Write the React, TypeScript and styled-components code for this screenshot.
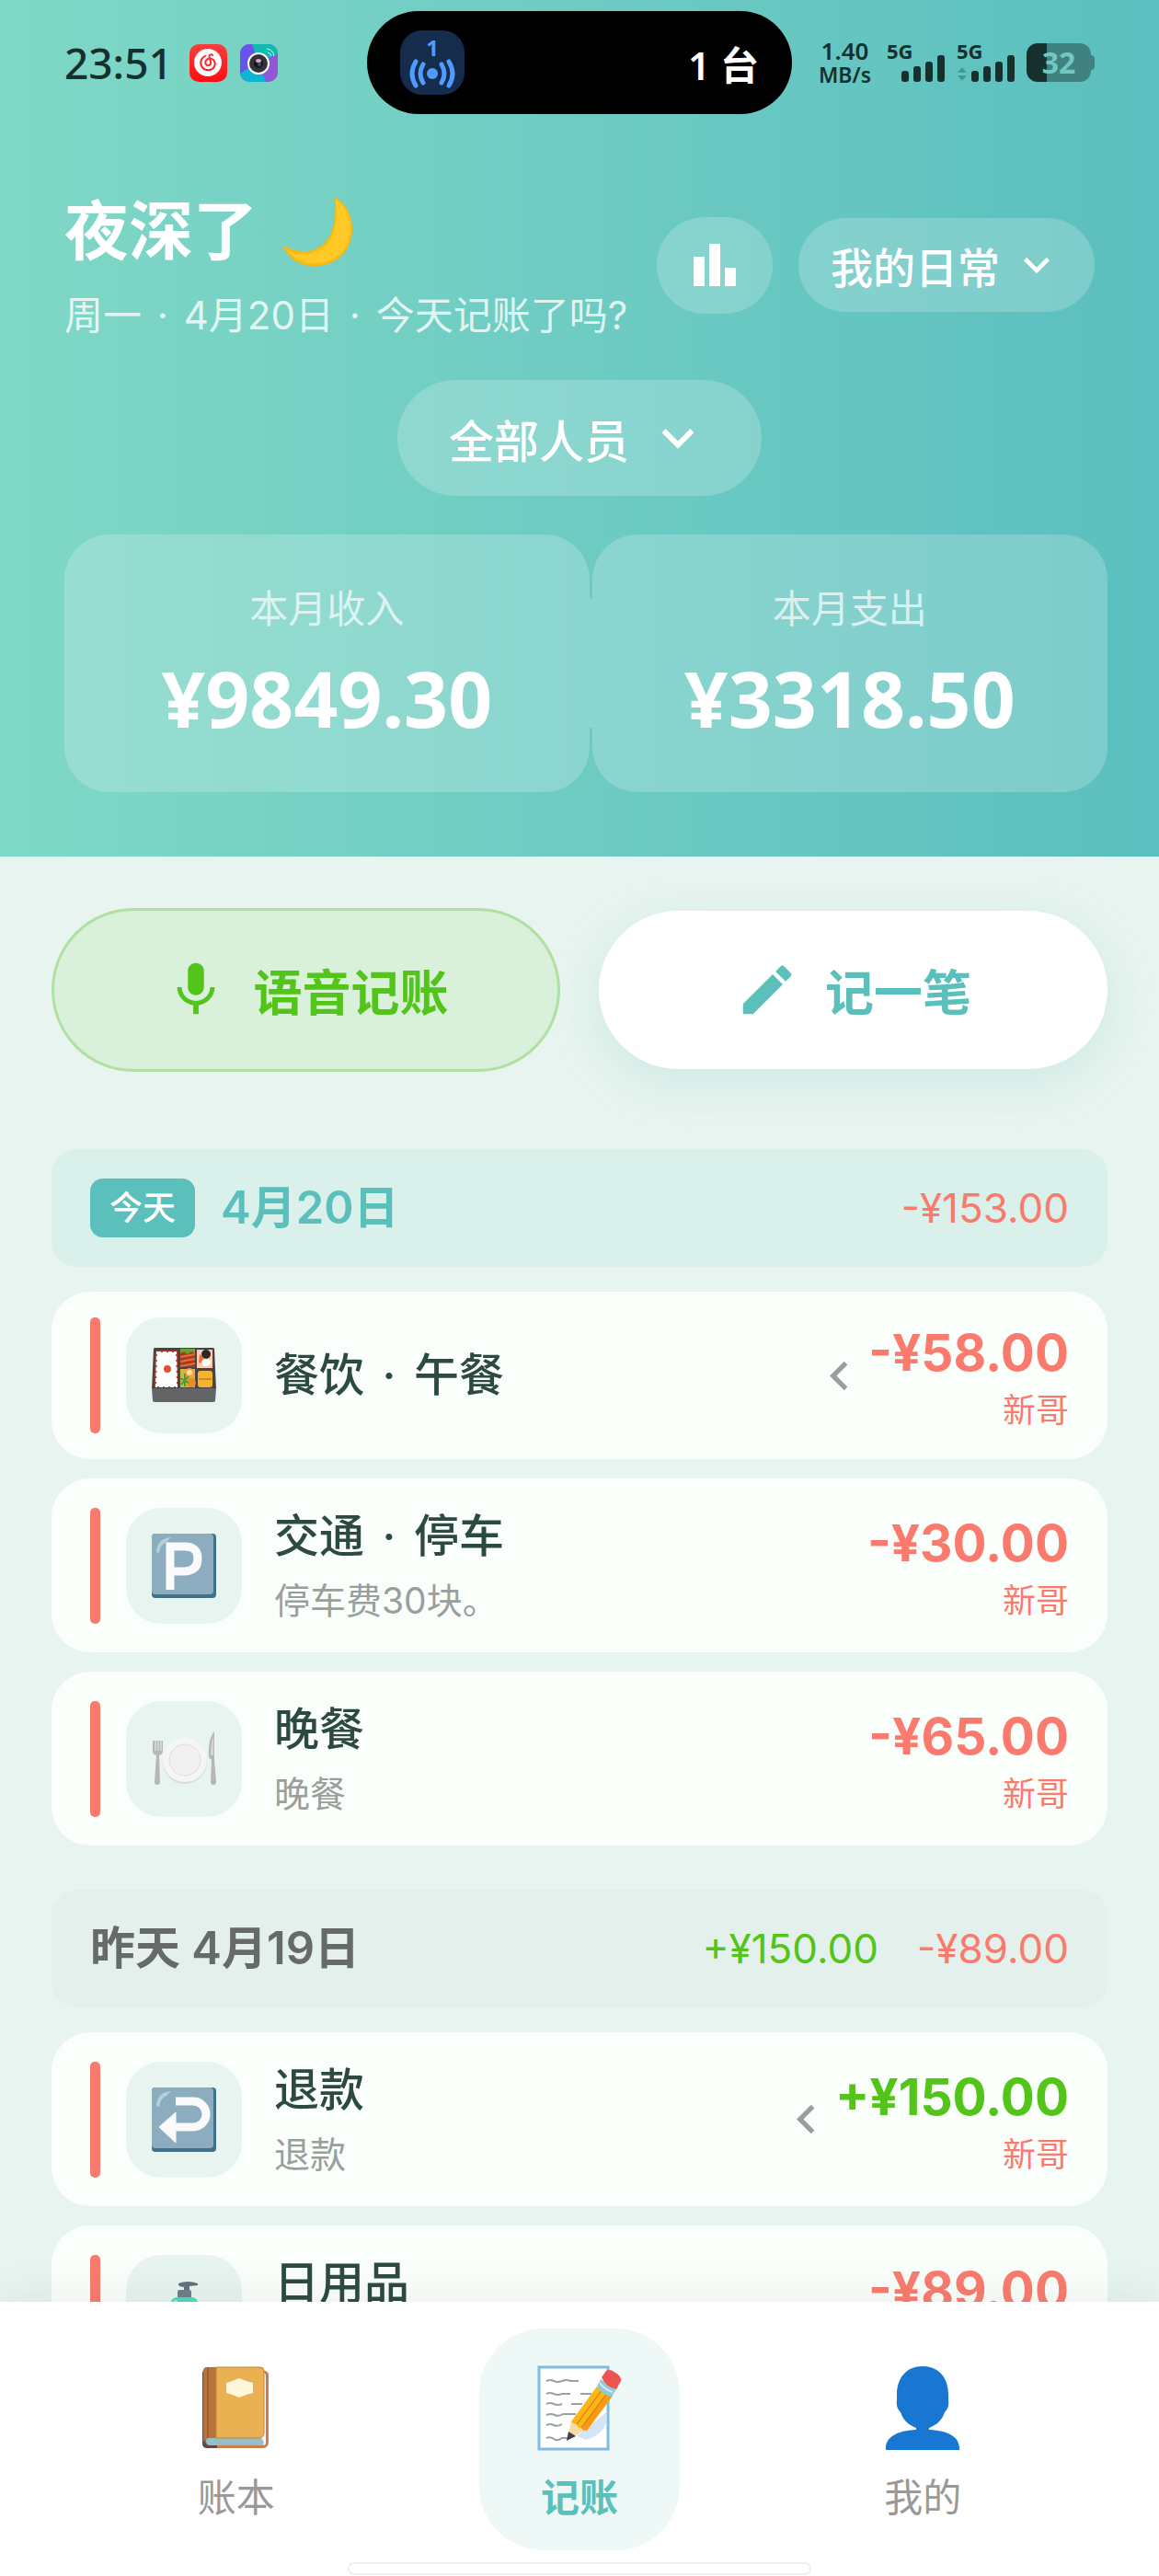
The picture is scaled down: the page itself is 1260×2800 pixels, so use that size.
import type { ReactNode } from 'react';
import styled, { createGlobalStyle } from 'styled-components';
import { MdEdit, MdKeyboardArrowDown, MdKeyboardArrowLeft } from 'react-icons/md';
import { SiNeteasecloudmusic } from 'react-icons/si';

type Tone = 'income' | 'expense';

interface Total {
  tone: Tone;
  text: string;
}

interface RecordItem {
  id: string;
  icon: ReactNode;
  category: string;
  detail?: string;
  note?: string;
  amount: string;
  tone: Tone;
  person: string;
  swipeHint?: boolean;
}

interface DayGroup {
  date: string;
  today?: boolean;
  totals: Total[];
  records: RecordItem[];
}

const colors = {
  teal: '#5bbfbb',
  income: '#52c41a',
  expense: '#fa7b6e',
  text: '#2d4a40',
  muted: '#999f9c',
};

export default function App() {
  return (
    <Screen>
      <GlobalStyle />
      <Header>
        <StatusBar />
        <TitleRow>
          <div>
            <Greeting>
              夜深了 <MoonIcon />
            </Greeting>
            <SubTitle>
              周一<Dot>·</Dot>4月20日<Dot>·</Dot>今天记账了吗?
            </SubTitle>
          </div>
          <HeaderActions>
            <ChartButton type="button" aria-label="统计">
              <ChartIcon />
            </ChartButton>
            <LedgerButton type="button">
              我的日常
              <MdKeyboardArrowDown />
            </LedgerButton>
          </HeaderActions>
        </TitleRow>
        <PersonButton type="button">
          全部人员
          <MdKeyboardArrowDown />
        </PersonButton>
        <Summary>
          <SummaryCard>
            <SummaryLabel>本月收入</SummaryLabel>
            <SummaryAmount>¥9849.30</SummaryAmount>
          </SummaryCard>
          <SummaryDivider />
          <SummaryCard>
            <SummaryLabel>本月支出</SummaryLabel>
            <SummaryAmount>¥3318.50</SummaryAmount>
          </SummaryCard>
        </Summary>
      </Header>

      <Content>
        <EntryButtons>
          <VoiceButton type="button">
            <MicIcon />
            语音记账
          </VoiceButton>
          <ManualButton type="button">
            <MdEdit />
            记一笔
          </ManualButton>
        </EntryButtons>

        {groups.map((group) => (
          <Day key={group.date}>
            <DayHeader $today={group.today}>
              <DayTitle>
                {group.today && <TodayBadge>今天</TodayBadge>}
                {group.date}
              </DayTitle>
              <DayTotals>
                {group.totals.map((total) => (
                  <DayTotal key={total.text} $tone={total.tone}>
                    {total.text}
                  </DayTotal>
                ))}
              </DayTotals>
            </DayHeader>
            <RecordList>
              {group.records.map((record) => (
                <RecordRow key={record.id} record={record} />
              ))}
            </RecordList>
          </Day>
        ))}
      </Content>

      <TabBar>
        <Tabs>
          <Tab href="#ledgers">
            <BookIcon />
            账本
          </Tab>
          <Tab href="#record" $active aria-current="page">
            <MemoIcon />
            记账
          </Tab>
          <Tab href="#me">
            <PersonIcon />
            我的
          </Tab>
        </Tabs>
        <HomeIndicator />
      </TabBar>
    </Screen>
  );
}

function RecordRow({ record }: { record: RecordItem }) {
  return (
    <RecordCard>
      <RecordBar />
      <RecordIcon>{record.icon}</RecordIcon>
      <RecordBody>
        <RecordTitle>
          {record.category}
          {record.detail && (
            <>
              <Dot>·</Dot>
              {record.detail}
            </>
          )}
        </RecordTitle>
        {record.note && <RecordNote>{record.note}</RecordNote>}
      </RecordBody>
      {record.swipeHint && (
        <SwipeHint>
          <MdKeyboardArrowLeft />
        </SwipeHint>
      )}
      <RecordSide>
        <RecordAmount $tone={record.tone}>{record.amount}</RecordAmount>
        <RecordPerson>{record.person}</RecordPerson>
      </RecordSide>
    </RecordCard>
  );
}

function StatusBar() {
  return (
    <StatusRow>
      <StatusLeft>
        <Clock>23:51</Clock>
        <MusicBadge>
          <SiNeteasecloudmusic />
        </MusicBadge>
        <CameraIcon />
      </StatusLeft>
      <Island>
        <HotspotChip>
          <span>1</span>
          <svg width="52" height="32" viewBox="0 0 52 32" fill="none" stroke="#4f9bff" strokeWidth="5" strokeLinecap="round">
            <circle cx="26" cy="16" r="6" fill="#4f9bff" stroke="none" />
            <path d="M16 6q-6 10 0 20M36 6q6 10 0 20M8 3q-8 13 0 26M44 3q8 13 0 26" />
          </svg>
        </HotspotChip>
        1 台
      </Island>
      <StatusRight>
        <NetSpeed>
          <strong>1.40</strong>
          <span>MB/s</span>
        </NetSpeed>
        <Signal />
        <Signal arrows />
        <Battery>32</Battery>
      </StatusRight>
    </StatusRow>
  );
}

function Signal({ arrows }: { arrows?: boolean }) {
  return (
    <SignalBox>
      <span>5G</span>
      <svg width="64" height="30" viewBox="0 0 64 30" fill="#16302e">
        {arrows && <path d="M1 20l5-6 5 6zM1 23l5 6 5-6z" fill="#3f9a96" />}
        <rect x="16" y="18" width="8" height="12" rx="3" />
        <rect x="29" y="13" width="8" height="17" rx="3" />
        <rect x="42" y="8" width="8" height="22" rx="3" />
        <rect x="55" y="1" width="8" height="29" rx="3" />
      </svg>
    </SignalBox>
  );
}

function CameraIcon() {
  return (
    <svg width="41" height="41" viewBox="0 0 41 41">
      <defs>
        <clipPath id="camera-clip">
          <rect width="41" height="41" rx="10" />
        </clipPath>
      </defs>
      <g clipPath="url(#camera-clip)">
        <rect width="41" height="41" fill="#9257d6" />
        <path d="M0 0h14l4 20L0 32z" fill="#6a52ec" />
        <path d="M13 0h28v10L20 20z" fill="#0fbab0" />
        <path d="M0 32l20-12 8 21H0z" fill="#0cb6d3" />
      </g>
      <path d="M29 5q7 1 8 8M30 9q4 1 4 4" stroke="#bff" strokeWidth="1" fill="none" />
      <circle cx="20" cy="21" r="11" fill="#333" stroke="#fff" strokeWidth="2" />
      <circle cx="20" cy="21" r="5" fill="#17121f" />
      <ellipse cx="20" cy="18" rx="3" ry="2" fill="#d9a5c4" />
      <circle cx="21" cy="22" r="2" fill="#4b4580" />
    </svg>
  );
}

function MoonIcon() {
  return (
    <svg width="80" height="80" viewBox="0 0 80 80">
      <path d="M59 2c2 28-3 46-16 54-12 8-26 6-41-1 7 16 23 24 39 22 22-2 37-18 37-40C78 22 71 9 59 2z" fill="#fbb90d" />
      <path d="M60 5c3 27-2 45-16 54-11 7-25 7-37 1 8 10 20 15 33 14 21-1 36-16 36-37 0-14-6-25-16-32z" fill="#ffca28" />
    </svg>
  );
}

function ChartIcon() {
  return (
    <svg width="46" height="46" viewBox="0 0 46 46" fill="currentColor">
      <path d="M0 14h12v32H0zM17 0h12v46H17zM34 26h12v20H34z" />
    </svg>
  );
}

function MicIcon() {
  return (
    <svg viewBox="0 0 24 24" fill="currentColor">
      <path d="M12 14c1.66 0 2.99-1.34 2.99-3L15 5c0-1.66-1.34-3-3-3S9 3.34 9 5v6c0 1.66 1.34 3 3 3zm5.3-3c0 3-2.54 5.1-5.3 5.1S6.7 14 6.7 11H5c0 3.41 2.72 6.23 6 6.72V21h2v-3.28c3.28-.48 6-3.3 6-6.72h-1.7z" />
    </svg>
  );
}

function BentoIcon() {
  return (
    <svg viewBox="0 0 70 70">
      <path d="M2 6q0-1 2-1h62q2 0 2 1l2 44H0z" fill="#4a4243" />
      <path d="M0 49h70l-1 13q0 2-2 2H3q-2 0-2-2z" fill="#636466" />
      <path d="M4 8h24v40H3z" fill="#b5432c" />
      <path d="M6 10h20l1 37H5z" fill="#fff" stroke="#fff" strokeWidth="2" strokeDasharray="4 2" />
      <circle cx="17" cy="28" r="4" fill="#e2502c" />
      <path d="M31 6h16v20H31z" fill="#a93a1f" />
      <path d="M31 6h16v5l-4-2-4 3-4-3-4 2z" fill="#6aa336" />
      <path d="M31 15l16-3M31 20l16-3M31 25l16-3" stroke="#e0703c" strokeWidth="2" />
      <path d="M49 7h17v20H49z" fill="#f7cdb5" />
      <ellipse cx="59" cy="12" rx="5" ry="5" fill="#33251f" />
      <path d="M52 12q6 3 4 10l-5-1z" fill="#f06a35" />
      <ellipse cx="59" cy="21" rx="5" ry="4" fill="#fff" />
      <path d="M31 28h16v20H31z" fill="#c7b945" />
      <circle cx="41" cy="33" r="6" fill="#f2a33a" />
      <circle cx="41" cy="32" r="3" fill="#fbe0a6" />
      <circle cx="43" cy="43" r="5" fill="#ef8a24" />
      <path d="M36 33v14M31 38l9 5M40 36l-8 9" stroke="#4f9a38" strokeWidth="2" />
      <rect x="50" y="30" width="16" height="18" rx="3" fill="#f2b32f" />
      <path d="M51 39h14" stroke="#d18a1c" strokeWidth="2" />
    </svg>
  );
}

function BlueTile({ children }: { children: ReactNode }) {
  return (
    <svg viewBox="0 0 70 70">
      <rect width="70" height="70" rx="4" fill="#437087" />
      <rect width="67" height="66" rx="4" fill="#8badbf" />
      <path d="M5 20q1-15 16-16l-5 5q-7 3-8 12z" fill="#b5d0dc" />
      {children}
    </svg>
  );
}

function ParkingIcon() {
  return (
    <BlueTile>
      <path d="M20 61V14h16q14 0 14 13T36 41H20" fill="none" stroke="#fafafa" strokeWidth="9" />
    </BlueTile>
  );
}

function ReturnIcon() {
  return (
    <BlueTile>
      <path d="M26 15h19a14 14 0 0 1 0 28H24" fill="none" stroke="#fafafa" strokeWidth="9" />
      <path d="M26 27v33L8 43z" fill="#fafafa" stroke="#fafafa" strokeWidth="1" strokeLinejoin="round" />
    </BlueTile>
  );
}

function PlateIcon() {
  return (
    <svg viewBox="0 0 70 70">
      <circle cx="36" cy="38" r="24" fill="#d9dedc" />
      <circle cx="36" cy="36" r="24" fill="#f5f5f5" />
      <circle cx="36" cy="36" r="17" fill="#f0f0f0" stroke="#dcdedd" strokeWidth="1" />
      <path d="M1 15v11q0 4 4 5L3 60q0 3 3 3t3-3L8 31q4-1 4-5V15" fill="#b5b7b7" />
      <path d="M4 14v12M7 14v12M10 14v12" stroke="#e9f3f0" strokeWidth="1" />
      <path d="M68 5q-7 8-6 28l3 3-1 24q0 3 3 3t3-3l-2-25z" fill="#b5b7b7" />
      <path d="M67 10q-3 8-3 21h3z" fill="#d5d7d7" />
    </svg>
  );
}

function SoapIcon() {
  return (
    <svg viewBox="0 0 70 70">
      <path d="M29 3q10-4 21 0v2l-9 1v5h-6V7q-4 0-6-2z" fill="#63727d" />
      <rect x="28" y="10" width="15" height="10" rx="2" fill="#6f7f8a" />
      <path d="M21 24q0-5 6-6h17q6 1 6 6v42q0 4-4 4H25q-4 0-4-4z" fill="#4bdcc1" />
      <circle cx="26" cy="23" r="2" fill="#a9f3e5" />
    </svg>
  );
}

function BookIcon() {
  return (
    <svg viewBox="-2 0 98 98">
      <path d="M14 8h60q8 1 8 5v72q0 8-6 8H18q-6 0-6-7z" fill="#c87f50" />
      <path d="M73 11h4q2 1 2 4v72q0 3-3 3l-4-2z" fill="#f5f5f5" />
      <path d="M14 84q2-3 6-3h52q6 3 4 9H18q-4-1-4-6z" fill="#93bfc8" />
      <path d="M13 7q-3 1-3 5v76q0 5 5 5h11v-3H17q-4-1-4-5 1-4 6-4h6V5z" fill="#5b4b45" />
      <path d="M11 9q0-4 4-4h10v77h-8q-4 0-6 5z" fill="#b77339" />
      <path d="M16 5v77" stroke="#8a4f25" strokeWidth="1" />
      <path d="M25 5h48q4 0 4 4v67q0 6-6 6H25z" fill="#eab153" stroke="#c38338" strokeWidth="1" />
      <path d="M36 22q8-2 14-5 7 3 15 5v11q-9 2-15 5-6-3-14-5z" fill="#fff7dc" />
    </svg>
  );
}

function MemoIcon() {
  return (
    <svg viewBox="-1 0 98 98">
      <rect x="4" y="5" width="75" height="89" fill="#fff" stroke="#7fbce3" strokeWidth="3" />
      <path d="M77 54L45 80l10 4q17-5 22-18z" fill="#d4e5f9" />
      <g fill="none" stroke="#96a3a4" strokeWidth="2">
        <path d="M12 20q4-2 8 0t9 0 9 0h9" />
        <path d="M12 34q4-2 8 0t9 0h9M49 34h12" />
        <path d="M12 45q4-2 8 0t9 0M39 45h12" />
        <path d="M12 57q5-2 9 0t9-1h14" />
        <path d="M12 68q4-2 8 0t9-1" />
        <path d="M12 82q4-2 8 1t9-1h9" />
      </g>
      <path d="M35 84l4-20 16 9z" fill="#f8dca5" />
      <path d="M34 85l2-10 8 5z" fill="#424242" />
      <path d="M39 64l28-38 17 10-28 38q-4 1-6-3-5 0-5-4-4 0-6-3z" fill="#ffb514" />
      <path d="M50 71l28-38 6 3-28 38q-4 0-6-3z" fill="#f89a15" />
      <path d="M45 67l28-38M50 71l28-38" stroke="#bd7417" strokeWidth="1" />
      <path d="M67 26l4-8 17 11-5 8q-9 0-16-11z" fill="#92c9d4" />
      <path d="M70 22q6 8 14 10" stroke="#d6edf2" strokeWidth="2" fill="none" />
      <path d="M72 16l5-7q4-3 10 2 7 4 6 9l-5 9q-11-2-16-13z" fill="#ee5350" />
    </svg>
  );
}

function PersonIcon() {
  return (
    <svg viewBox="0 0 98 98">
      <path
        d="M49 4c17 0 28 12 28 31v6c1 6-1 10-4 13-3 9-9 14-17 17v2c21 1 33 8 33 20v2H9v-2c0-12 12-19 33-20v-2c-8-3-14-8-17-17-3-3-5-7-4-13v-6C21 16 32 4 49 4z"
        fill="#1976d2"
      />
    </svg>
  );
}

const groups: DayGroup[] = [
  {
    date: '4月20日',
    today: true,
    totals: [{ tone: 'expense', text: '-¥153.00' }],
    records: [
      { id: 'lunch', icon: <BentoIcon />, category: '餐饮', detail: '午餐', amount: '-¥58.00', tone: 'expense', person: '新哥', swipeHint: true },
      { id: 'parking', icon: <ParkingIcon />, category: '交通', detail: '停车', note: '停车费30块。', amount: '-¥30.00', tone: 'expense', person: '新哥' },
      { id: 'dinner', icon: <PlateIcon />, category: '晚餐', note: '晚餐', amount: '-¥65.00', tone: 'expense', person: '新哥' },
    ],
  },
  {
    date: '昨天 4月19日',
    totals: [
      { tone: 'income', text: '+¥150.00' },
      { tone: 'expense', text: '-¥89.00' },
    ],
    records: [
      { id: 'refund', icon: <ReturnIcon />, category: '退款', note: '退款', amount: '+¥150.00', tone: 'income', person: '新哥', swipeHint: true },
      { id: 'daily', icon: <SoapIcon />, category: '日用品', note: '日用品', amount: '-¥89.00', tone: 'expense', person: '新哥' },
    ],
  },
];

const GlobalStyle = createGlobalStyle`
  * {
    box-sizing: border-box;
  }

  body {
    margin: 0;
    background: #e8f4f0;
    font-family: Inter, 'Noto Sans CJK SC', sans-serif;
  }

  button {
    border: none;
    font-family: inherit;
    cursor: pointer;
  }

  svg {
    display: block;
    flex: none;
  }
`;

const Screen = styled.div`
  display: flex;
  flex-direction: column;
  height: 100vh;
  overflow: hidden;
`;

const Header = styled.header`
  flex: none;
  display: flex;
  flex-direction: column;
  padding: 0 56px 70px 70px;
  background: linear-gradient(90deg, #80d8c6, #5bbfbf);
  color: #fff;
`;

const StatusRow = styled.div`
  display: grid;
  grid-template-columns: 1fr 462px 1fr;
  align-items: center;
  height: 136px;
  margin-right: 14px;
  color: #16302e;
  font-family: 'Noto Sans', 'Noto Sans CJK SC', sans-serif;
`;

const StatusLeft = styled.div`
  display: flex;
  align-items: center;
  gap: 14px;
`;

const Clock = styled.span`
  margin-right: 4px;
  font-size: 46px;
  font-weight: 500;
`;

const MusicBadge = styled.span`
  display: flex;
  align-items: center;
  justify-content: center;
  width: 41px;
  height: 41px;
  border-radius: 10px;
  background: linear-gradient(180deg, #f8403c, #fd0d12);
  color: #fff;
  font-size: 30px;
`;

const Island = styled.div`
  display: flex;
  align-items: center;
  justify-content: space-between;
  height: 112px;
  padding: 0 36px;
  border-radius: 56px;
  background: #000;
  color: #fff;
  font-size: 42px;
  font-weight: 600;
`;

const HotspotChip = styled.div`
  display: flex;
  flex-direction: column;
  align-items: center;
  justify-content: center;
  width: 70px;
  height: 70px;
  border-radius: 24px;
  background: #162c4d;
  color: #4f9bff;
  font-size: 24px;
  font-weight: 700;
  line-height: 24px;
`;

const StatusRight = styled.div`
  display: flex;
  align-items: center;
  justify-content: flex-end;
  gap: 12px;
  padding-right: 4px;
`;

const NetSpeed = styled.div`
  display: flex;
  flex-direction: column;
  align-items: center;
  margin-right: 5px;
  font-size: 23px;
  font-weight: 600;
  line-height: 26px;

  strong {
    font-size: 26px;
    font-weight: 600;
  }
`;

const SignalBox = styled.div`
  position: relative;
  display: flex;
  align-items: flex-end;
  height: 42px;

  span {
    position: absolute;
    top: -4px;
    left: 0;
    font-size: 22px;
    font-weight: 700;
    line-height: 24px;
  }
`;

const Battery = styled.div`
  position: relative;
  width: 70px;
  height: 42px;
  border-radius: 12px;
  background: linear-gradient(90deg, #16302e 22px, #40827f 22px);
  color: #74c6c2;
  font-size: 32px;
  font-weight: 700;
  line-height: 42px;
  text-align: center;

  &::after {
    content: '';
    position: absolute;
    top: 13px;
    right: -4px;
    width: 4px;
    height: 16px;
    border-radius: 0 4px 4px 0;
    background: #40827f;
  }
`;

const TitleRow = styled.div`
  display: flex;
  align-items: center;
  justify-content: space-between;
  margin: 67px 14px 40px 0;
`;

const Greeting = styled.h1`
  display: flex;
  align-items: center;
  gap: 25px;
  margin: 0 0 12px;
  font-size: 70px;
  font-weight: 700;
  line-height: 98px;
`;

const SubTitle = styled.p`
  margin: 0;
  color: rgba(255, 255, 255, 0.8);
  font-size: 42px;
  line-height: 60px;
  white-space: nowrap;
`;

const Dot = styled.span`
  margin: 0 0.4em;
`;

const HeaderActions = styled.div`
  display: flex;
  align-items: center;
  gap: 28px;
`;

const GlassButton = styled.button`
  display: flex;
  align-items: center;
  justify-content: center;
  background: rgba(255, 255, 255, 0.2);
  color: #fff;
  font-weight: 500;
`;

const ChartButton = styled(GlassButton)`
  width: 126px;
  height: 105px;
  border-radius: 52px;
`;

const LedgerButton = styled(GlassButton)`
  height: 102px;
  gap: 12px;
  padding: 0 35px;
  border-radius: 51px;
  font-size: 46px;

  svg {
    font-size: 56px;
  }
`;

const PersonButton = styled(GlassButton)`
  align-self: center;
  height: 126px;
  gap: 18px;
  margin: 0 14px 42px 0;
  padding: 0 56px;
  border-radius: 63px;
  font-size: 49px;

  svg {
    font-size: 70px;
  }
`;

const Summary = styled.div`
  display: grid;
  grid-template-columns: 57fr 3px 56fr;
  align-items: center;
`;

const SummaryCard = styled.div`
  padding: 53px 20px;
  border-radius: 49px;
  background: rgba(255, 255, 255, 0.2);
  text-align: center;
`;

const SummaryDivider = styled.div`
  height: 140px;
  background: rgba(255, 255, 255, 0.2);
`;

const SummaryLabel = styled.div`
  margin-bottom: 20px;
  color: rgba(255, 255, 255, 0.7);
  font-size: 42px;
  line-height: 56px;
`;

const SummaryAmount = styled.div`
  font-family: 'Noto Sans', sans-serif;
  font-size: 84px;
  font-weight: 700;
  line-height: 98px;
`;

const Content = styled.main`
  flex: 1;
  min-height: 0;
  padding: 56px 56px 0;
  overflow-y: auto;
  scrollbar-width: none;
`;

const EntryButtons = styled.div`
  display: grid;
  grid-template-columns: 1fr 1fr;
  align-items: center;
  gap: 42px;
  margin-bottom: 84px;
`;

const EntryButton = styled.button`
  display: flex;
  align-items: center;
  justify-content: center;
  gap: 28px;
  height: 172px;
  border-radius: 86px;
  font-size: 53px;
  font-weight: 600;

  svg {
    width: 70px;
    height: 70px;
  }
`;

const VoiceButton = styled(EntryButton)`
  height: 178px;
  border: 3px solid #b0e0a2;
  border-radius: 89px;
  background: #d9f0db;
  color: ${colors.income};
`;

const ManualButton = styled(EntryButton)`
  background: #fff;
  color: ${colors.teal};
  box-shadow: 0 14px 56px rgba(91, 191, 175, 0.18);
`;

const Day = styled.section`
  margin-bottom: 48px;
`;

const DayHeader = styled.div<{ $today?: boolean }>`
  display: flex;
  align-items: center;
  justify-content: space-between;
  margin-bottom: 27px;
  padding: 32px 42px;
  border-radius: 28px;
  background: ${({ $today }) => ($today ? '#daf0ea' : '#e4f0ec')};
  color: ${({ $today }) => ($today ? colors.teal : '#666a68')};
`;

const DayTitle = styled.h2`
  display: flex;
  align-items: center;
  gap: 28px;
  margin: 0;
  font-size: 49px;
  font-weight: 600;
  line-height: 64px;
`;

const TodayBadge = styled.span`
  padding: 0 21px;
  border-radius: 14px;
  background: ${colors.teal};
  color: #fff;
  font-size: 36px;
  font-weight: 500;
`;

const DayTotals = styled.div`
  display: flex;
  gap: 42px;
`;

const DayTotal = styled.span<{ $tone: Tone }>`
  color: ${({ $tone }) => colors[$tone]};
  font-size: 44px;
  line-height: 64px;
`;

const RecordList = styled.ul`
  display: flex;
  flex-direction: column;
  gap: 21px;
  margin: 0;
  padding: 0;
  list-style: none;
`;

const RecordCard = styled.li`
  display: flex;
  align-items: center;
  padding: 28px 42px;
  border-radius: 42px;
  background: #fbfffc;
`;

const RecordBar = styled.span`
  width: 11px;
  height: 126px;
  margin-right: 28px;
  border-radius: 5px;
  background: ${colors.expense};
`;

const RecordIcon = styled.span`
  display: flex;
  align-items: center;
  justify-content: center;
  width: 126px;
  height: 126px;
  margin-right: 35px;
  border-radius: 38px;
  background: #e8f4f0;

  svg {
    width: 70px;
    height: 70px;
  }
`;

const RecordBody = styled.div`
  flex: 1;
  min-width: 0;
`;

const RecordTitle = styled.div`
  color: ${colors.text};
  font-size: 49px;
  font-weight: 500;
  line-height: 70px;
`;

const RecordNote = styled.div`
  margin-top: 7px;
  color: ${colors.muted};
  font-size: 39px;
  line-height: 56px;
`;

const SwipeHint = styled.span`
  color: ${colors.muted};
  font-size: 63px;
`;

const RecordSide = styled.div`
  text-align: right;
`;

const RecordAmount = styled.div<{ $tone: Tone }>`
  color: ${({ $tone }) => colors[$tone]};
  font-size: 55px;
  font-weight: 700;
  line-height: 77px;
`;

const RecordPerson = styled.div`
  color: ${colors.expense};
  font-size: 36px;
  line-height: 49px;
`;

const TabBar = styled.footer`
  flex: none;
  z-index: 1;
  display: flex;
  flex-direction: column;
  align-items: center;
  gap: 13px;
  padding: 29px 70px 1px;
  background: #fff;
  box-shadow: 0 -7px 42px rgba(45, 74, 64, 0.08);
`;

const Tabs = styled.nav`
  display: grid;
  grid-template-columns: repeat(3, 1fr);
  justify-items: center;
  width: 100%;
`;

const Tab = styled.a<{ $active?: boolean }>`
  display: flex;
  flex-direction: column;
  align-items: center;
  gap: 21px;
  padding: 37px 60px 29px;
  border-radius: 70px;
  background: ${({ $active }) => ($active ? '#eef8f6' : 'transparent')};
  color: ${({ $active }) => ($active ? colors.teal : '#999')};
  font-size: 42px;
  font-weight: ${({ $active }) => ($active ? 600 : 400)};
  line-height: 56px;
  text-decoration: none;

  svg {
    width: 98px;
    height: 98px;
  }
`;

const HomeIndicator = styled.div`
  width: 45%;
  height: 14px;
  border: 2px solid #efefef;
  border-radius: 7px;
  background: #fff;
`;
